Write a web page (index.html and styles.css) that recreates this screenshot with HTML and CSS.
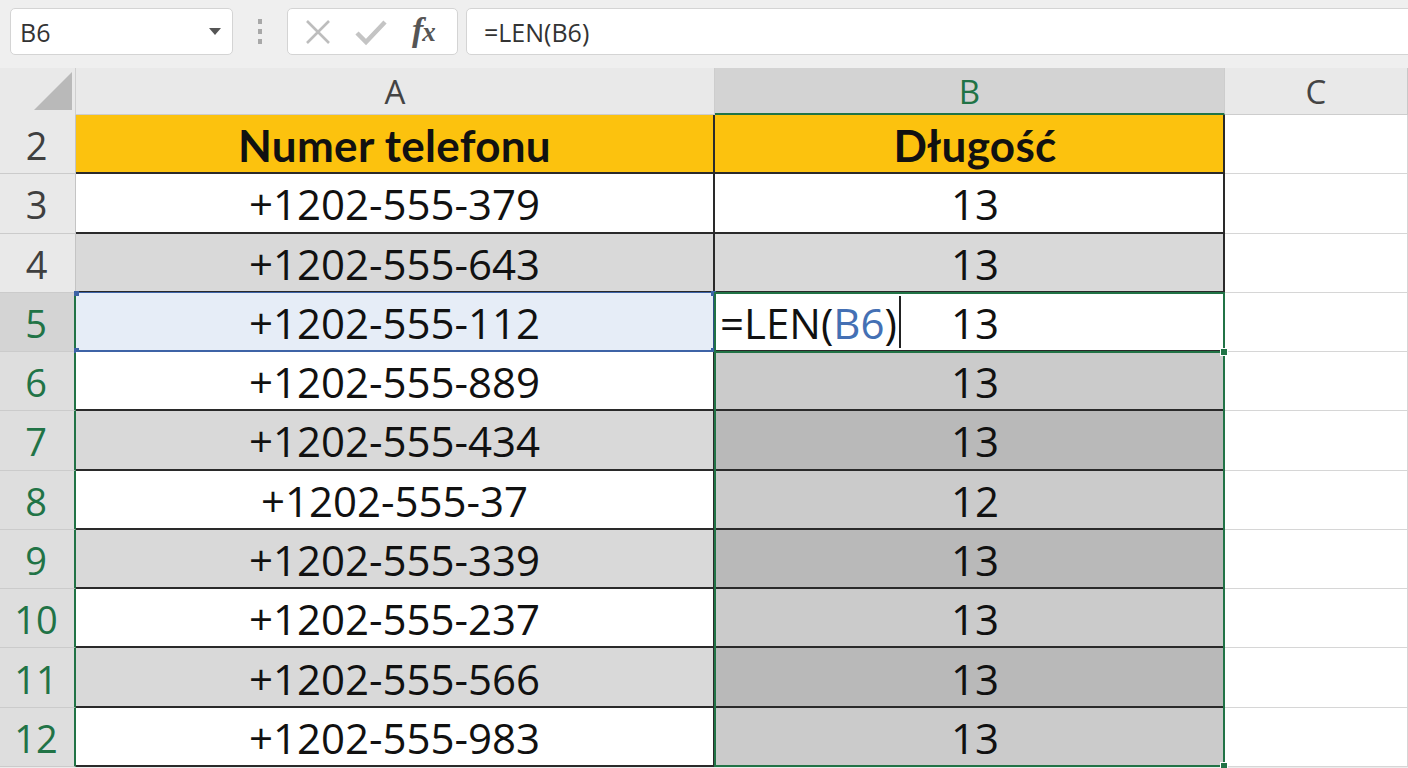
FILE: index.html
```html
<!DOCTYPE html>
<html lang="pl">
<head>
<meta charset="utf-8">
<title>Arkusz – długość numeru</title>
<link rel="stylesheet" href="styles.css">
</head>
<body>
<div class="app">
  <div class="toolbar">
    <div class="namebox">
      <span class="name">B6</span>
      <span class="drop"></span>
    </div>
    <div class="grip"><i></i><i></i><i></i></div>
    <div class="btns">
      <svg class="ico" width="30" height="30" viewBox="0 0 30 30"><path d="M4 4 L26 26 M26 4 L4 26" stroke="#bdbdbd" stroke-width="2.6" fill="none"/></svg>
      <svg class="ico" width="34" height="30" viewBox="0 0 34 30"><path d="M3 16 L12 25 L31 5" stroke="#c4c4c4" stroke-width="4.5" fill="none" stroke-linejoin="miter"/></svg>
      <span class="fx">f<span class="fx-x">x</span></span>
    </div>
    <div class="formula">=LEN(B6)</div>
  </div>

  <div class="sheet">
    <div class="corner"><svg width="76" height="47" viewBox="0 0 76 47"><polygon points="72,4 72,42 34,42" fill="#b9b9b9"/></svg></div>
    <div class="colhead">A</div>
    <div class="colhead sel">B</div>
    <div class="colhead last">C</div>

    <div class="rowhead">2</div>
    <div class="cell hdr">Numer telefonu</div>
    <div class="cell hdr colb">Długość</div>
    <div class="cell empty"></div>

    <div class="rowhead">3</div>
    <div class="cell">+1202-555-379</div>
    <div class="cell colb">13</div>
    <div class="cell empty"></div>

    <div class="rowhead">4</div>
    <div class="cell g">+1202-555-643</div>
    <div class="cell colb g">13</div>
    <div class="cell empty"></div>

    <div class="rowhead on active">5</div>
    <div class="cell ref">+1202-555-112
      <span class="hd tl"></span><span class="hd bl"></span><span class="hd tr"></span><span class="hd br"></span>
    </div>
    <div class="cell colb edit">
      <span class="typed">=LEN(<span class="refname">B6</span>)<span class="cursor"></span></span>
      13
    </div>
    <div class="cell empty"></div>

    <div class="rowhead on">6</div>
    <div class="cell">+1202-555-889</div>
    <div class="cell colb s1">13</div>
    <div class="cell empty"></div>

    <div class="rowhead on">7</div>
    <div class="cell g">+1202-555-434</div>
    <div class="cell colb s2">13</div>
    <div class="cell empty"></div>

    <div class="rowhead on">8</div>
    <div class="cell">+1202-555-37</div>
    <div class="cell colb s1">12</div>
    <div class="cell empty"></div>

    <div class="rowhead on">9</div>
    <div class="cell g">+1202-555-339</div>
    <div class="cell colb s2">13</div>
    <div class="cell empty"></div>

    <div class="rowhead on">10</div>
    <div class="cell">+1202-555-237</div>
    <div class="cell colb s1">13</div>
    <div class="cell empty"></div>

    <div class="rowhead on">11</div>
    <div class="cell g">+1202-555-566</div>
    <div class="cell colb s2">13</div>
    <div class="cell empty"></div>

    <div class="rowhead on">12</div>
    <div class="cell">+1202-555-983</div>
    <div class="cell colb s1">13</div>
    <div class="cell empty"></div>

    <!-- selection frame over B5:B12 and the active cell -->
    <div class="range"><span class="fill"></span></div>
    <div class="activebox"><span class="fill"></span></div>
  </div>
</div>
</body>
</html>
```

FILE: styles.css
```css
* { box-sizing: border-box; }

html, body {
  margin: 0;
  padding: 0;
  background: #ececec;
  overflow: hidden;
}

.app {
  width: 1408px;
  height: 768px;
  overflow: hidden;
  font-family: "Open Sans", "Noto Sans", sans-serif;
}

/* ---------- formula toolbar ---------- */
.toolbar {
  height: 68px;
  display: flex;
  align-items: flex-start;
  padding: 8px 0 0 10px;
  background: #efefef;
}

.namebox {
  width: 223px;
  height: 47px;
  background: #fff;
  border: 1px solid #d4d4d4;
  border-radius: 5px;
  display: flex;
  align-items: center;
  justify-content: space-between;
  padding: 0 11px 0 9px;
}

.name {
  font-size: 25px;
  color: #333;
}

.drop {
  width: 0;
  height: 0;
  border-left: 6px solid transparent;
  border-right: 6px solid transparent;
  border-top: 7px solid #555;
}

.grip {
  width: 54px;
  height: 47px;
  display: flex;
  flex-direction: column;
  align-items: center;
  justify-content: center;
  gap: 5px;
}

.grip i {
  display: block;
  width: 4px;
  height: 5px;
  background: #a8a8a8;
}

.btns {
  width: 171px;
  height: 47px;
  background: #fff;
  border: 1px solid #d4d4d4;
  border-radius: 5px;
  display: flex;
  align-items: center;
  padding: 0 0 0 15px;
  gap: 21px;
}

.ico { display: block; }

.fx {
  font-family: "Liberation Serif", "DejaVu Serif", serif;
  font-style: italic;
  font-weight: bold;
  font-size: 34px;
  color: #555;
  margin-left: 3px;
  letter-spacing: -1px;
  line-height: 1;
  padding-bottom: 3px;
}

.fx-x {
  font-size: 27px;
}

.formula {
  flex: 1;
  height: 47px;
  margin-left: 8px;
  margin-right: -10px;
  background: #fff;
  border: 1px solid #d4d4d4;
  border-radius: 5px 0 0 5px;
  display: flex;
  align-items: center;
  padding-left: 17px;
  font-size: 25px;
  color: #333;
}

/* ---------- worksheet grid ---------- */
.sheet {
  position: relative;
  display: grid;
  grid-template-columns: 76px 639px 510px 183px;
  grid-template-rows: 47px repeat(11, 59.27px);
  background: #fff;
}

.corner {
  background: #e9e9e9;
  border-right: 1px solid #cfcfcf;
}

.corner svg { display: block; }

.colhead {
  background: #e9e9e9;
  border-right: 1px solid #cdcdcd;
  border-bottom: 1px solid #cdcdcd;
  display: flex;
  align-items: center;
  justify-content: center;
  font-size: 33px;
  color: #444;
  padding-top: 1px;
}

.colhead.sel {
  background: #d3d3d3;
  color: #217346;
  border-bottom: 2px solid #217346;
}

.colhead.last { border-right: 1px solid #c8c8c8; }

.rowhead {
  background: #e9e9e9;
  border-bottom: 1px solid #cbcbcb;
  border-right: 1px solid #c4c4c4;
  display: flex;
  align-items: center;
  justify-content: center;
  font-size: 38px;
  color: #3f3f3f;
  padding-right: 2px;
  padding-top: 2px;
}

.rowhead.on {
  background: #dedede;
  color: #217346;
  border-right: 2px solid #217346;
}

.rowhead.active { background: #d4d4d4; }

.cell {
  position: relative;
  display: flex;
  align-items: center;
  justify-content: center;
  font-size: 42px;
  color: #111;
  background: #fff;
  border-right: 2px solid #2a2a2a;
  border-bottom: 2px solid #2a2a2a;
  white-space: nowrap;
  padding-top: 2px;
}

.cell.colb { padding-left: 12px; }

.cell.hdr {
  background: #fcc20e;
  font-weight: bold;
  font-family: "Lato", "Open Sans", sans-serif;
  font-size: 44px;
  letter-spacing: 0.3px;
}

.cell.g { background: #d9d9d9; }
.cell.s1 { background: #cbcbcb; }
.cell.s2 { background: #b9b9b9; }

.cell.empty {
  background: #fff;
  border-right: 1px solid #d6d6d6;
  border-bottom: 1px solid #d6d6d6;
}

/* row 5, column A: referenced cell */
.cell.ref {
  background: #e6edf7;
  border-top: 1px solid #3d63a6;
  border-bottom: 2px solid #3d63a6;
  margin-top: -1px;
  border-right-color: #2f4f86;
}

.hd {
  position: absolute;
  width: 5px;
  height: 5px;
  background: #3d63a6;
}
.hd.tl { left: -2px; top: -2px; }
.hd.bl { left: -2px; bottom: -3px; }
.hd.tr { right: -3px; top: -2px; }
.hd.br { right: -3px; bottom: -3px; }

/* row 5, column B: cell being edited */
.cell.edit { background: #fff; }

.typed {
  position: absolute;
  left: 5px;
  top: 0;
  bottom: 0;
  display: flex;
  align-items: center;
  color: #111;
  padding-top: 2px;
}

.refname { color: #4470b4; }

.cursor {
  display: inline-block;
  width: 2px;
  height: 52px;
  background: #222;
  margin-left: 2px;
}

/* selection frames, laid over the grid areas they outline */
.range,
.activebox {
  position: absolute;
  top: -1px;
  left: -1px;
  right: 0;
  bottom: 0;
  border: 2px solid #217346;
  pointer-events: none;
}

.range {
  grid-column: 3 / 4;
  grid-row: 5 / 13;
}

.activebox {
  grid-column: 3 / 4;
  grid-row: 5 / 6;
  bottom: -1px;
}

.fill {
  position: absolute;
  right: -5px;
  bottom: -5px;
  width: 8px;
  height: 8px;
  background: #217346;
  border: 1px solid #fff;
}
```
